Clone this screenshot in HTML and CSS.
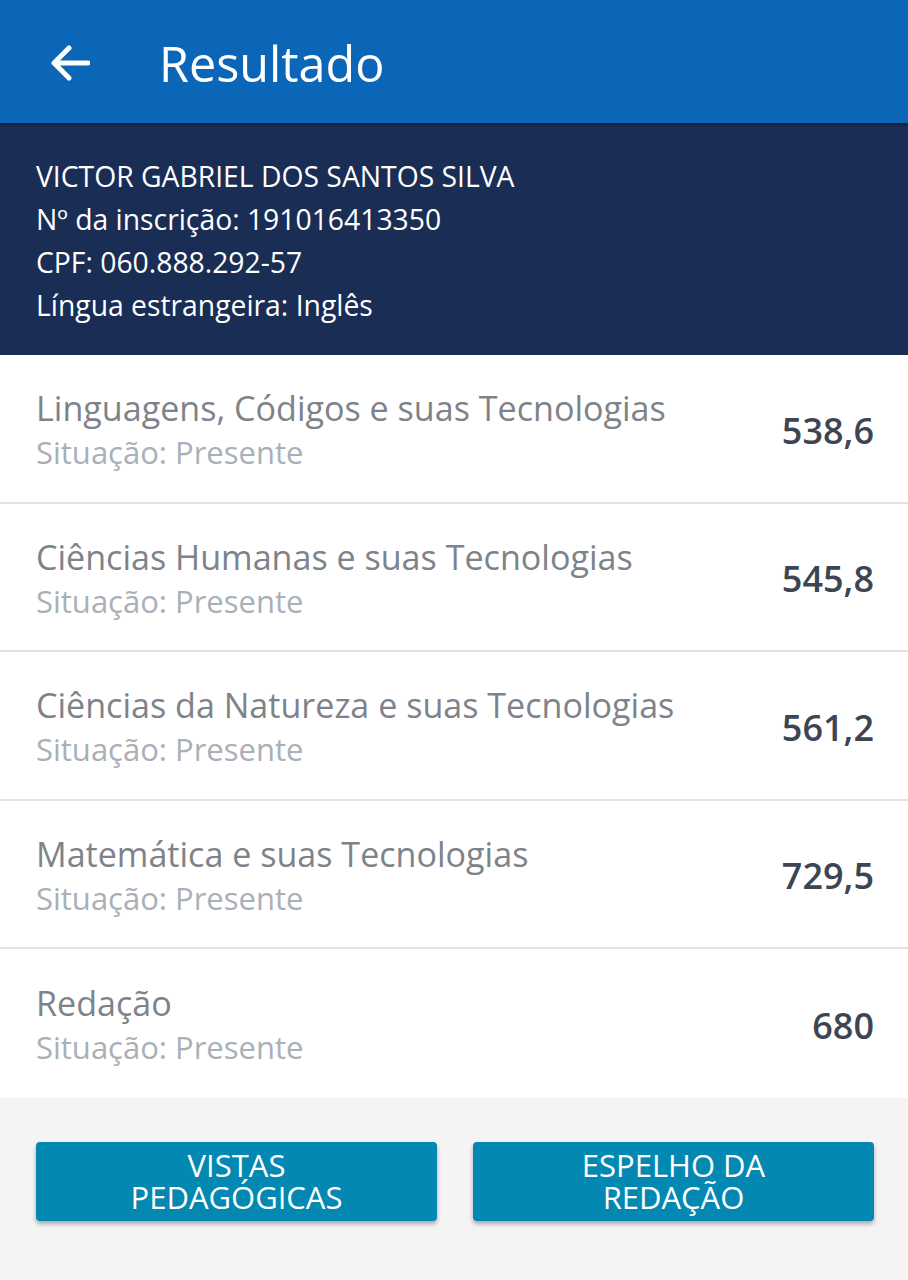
FILE: index.html
```html
<!DOCTYPE html>
<html lang="pt-BR">
<head>
<meta charset="utf-8">
<link rel="stylesheet" href="styles.css">
</head>
<body>
<div class="app">
  <header class="appbar">
    <svg class="back" width="40" height="36" viewBox="0 0 40 36"><path d="M38 18H5M19 3L4 18l15 15" fill="none" stroke="#fff" stroke-width="5" stroke-linecap="round" stroke-linejoin="round"/></svg>
    <h1 class="title">Resultado</h1>
  </header>
  <section class="info">
    <p>VICTOR GABRIEL DOS SANTOS SILVA</p>
    <p>Nº da inscrição: 191016413350</p>
    <p>CPF: 060.888.292-57</p>
    <p>Língua estrangeira: Inglês</p>
  </section>
  <ul class="list">
    <li class="row"><div class="txt"><div class="name">Linguagens, Códigos e suas Tecnologias</div><div class="sit">Situação: Presente</div></div><div class="score">538,6</div></li>
    <li class="row"><div class="txt"><div class="name">Ciências Humanas e suas Tecnologias</div><div class="sit">Situação: Presente</div></div><div class="score">545,8</div></li>
    <li class="row"><div class="txt"><div class="name">Ciências da Natureza e suas Tecnologias</div><div class="sit">Situação: Presente</div></div><div class="score">561,2</div></li>
    <li class="row"><div class="txt"><div class="name">Matemática e suas Tecnologias</div><div class="sit">Situação: Presente</div></div><div class="score">729,5</div></li>
    <li class="row"><div class="txt"><div class="name">Redação</div><div class="sit">Situação: Presente</div></div><div class="score">680</div></li>
  </ul>
  <div class="actions">
    <button class="btn"><span class="ln">VISTAS</span><span class="ln">PEDAGÓGICAS</span></button>
    <button class="btn"><span class="ln">ESPELHO DA</span><span class="ln">REDAÇÃO</span></button>
  </div>
</div>
</body>
</html>
```
FILE: styles.css
```css
* { box-sizing: border-box; }
html, body { margin: 0; padding: 0; }
body { font-family: "Open Sans", "Noto Sans", sans-serif; background: #f4f4f4; width: 908px; height: 1280px; overflow: hidden; }
.app { display: flex; flex-direction: column; min-height: 1280px; }
.appbar { height: 123px; background: #0c66b8; display: flex; align-items: center; padding-left: 50px; box-shadow: 0 2px 3px rgba(0,0,0,0.3); position: relative; z-index: 1; }
.back { display: block; margin-top: 2px; }
.title { margin: 0 0 0 69px; color: #fff; font-weight: 400; font-size: 48.5px; line-height: 1; padding-top: 3px; }
.info { background: #1a2d55; color: #fff; padding: 32px 36px 28px; height: 232px; }
.info p { margin: 0; font-size: 28.3px; line-height: 43px; }
.list { list-style: none; margin: 0; padding: 0; background: #fff; }
.row { height: 148.5px; display: flex; align-items: center; justify-content: space-between; padding: 4px 34px 0 36px; border-bottom: 2px solid #e2e2e2; }
.row:last-child { border-bottom: none; }
.name { font-size: 34.1px; color: #7e8389; line-height: 44px; }
.sit { font-size: 31px; color: #a9b0b7; line-height: 44px; }
.score { font-size: 36px; font-weight: 600; color: #3c4551; }
.actions { flex: 1; background: #f4f4f4; display: flex; gap: 36px; padding: 44px 34px 0 36px; align-items: flex-start; }
.btn { flex: 1; height: 79px; border: none; border-radius: 4px; background: #0388b2; color: #fff; font-family: "Open Sans", "Noto Sans", sans-serif; font-size: 31px; box-shadow: 0 3px 4px rgba(0,0,0,0.3); padding: 0; display: flex; flex-direction: column; align-items: center; justify-content: center; gap: 0; }
.ln { display: block; line-height: 32px; }
```
